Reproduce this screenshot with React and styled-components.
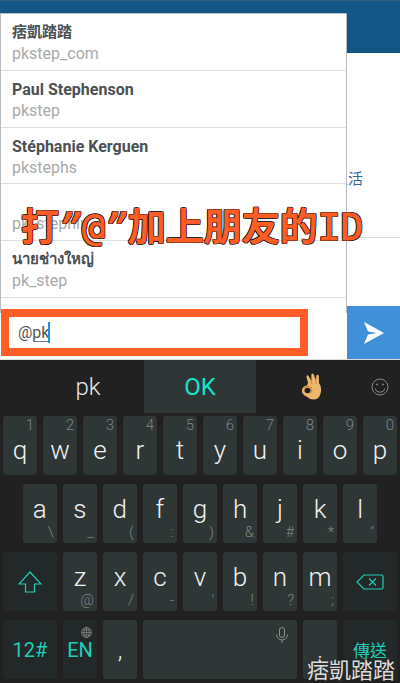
import React from "react";
import styled, { createGlobalStyle } from "styled-components";

const people = [
  { name: "痞凱踏踏", handle: "pkstep_com", compact: true },
  { name: "Paul Stephenson", handle: "pkstep" },
  { name: "Stéphanie Kerguen", handle: "pkstephs" },
  { name: "", handle: "pk_stephin" },
  { name: "นายช่างใหญ่", handle: "pk_step", compact: true },
];

const topRow = ["q1", "w2", "e3", "r4", "t5", "y6", "u7", "i8", "o9", "p0"];
const homeRow = ["a\\", "s_", "d(", "f:", "g)", "h&", "j#", "k*", 'l"'];
const bottomRow = ["z@", "x/", "c-", "v'", "b!", "n?", "m;"];

const LetterKeys = ({ keys, top }) =>
  keys.map(([letter, hint]) => (
    <Key key={letter}>
      <Letter $low={top}>{letter}</Letter>
      <Hint $top={top}>{hint}</Hint>
    </Key>
  ));

const App = () => {
  return (
    <>
      <GlobalStyle />
      <Screen>
        <Chat>
          <Header />
          <Content>
            <Message>生活</Message>
          </Content>
          <Compose>
            <InputFrame>
              <Mention type="text" aria-label="Message" defaultValue="@pk" />
              <Underline />
              <Caret />
            </InputFrame>
            <SendButton aria-label="Send">
              <svg width="20" height="22" viewBox="0 0 20 22">
                <path d="M0 0L20 11L0 22L4 12.500L13 11L4 9.500Z" fill="#fff" />
              </svg>
            </SendButton>
          </Compose>
          <Popup>
            <People>
              {people.map((person) => (
                <Person key={person.handle}>
                  <Name $compact={person.compact}>{person.name}</Name>
                  <Handle>{person.handle}</Handle>
                </Person>
              ))}
            </People>
          </Popup>
          <Caption>
            打<Latin>
              <Slant>”</Slant>@<Slant>”</Slant>
            </Latin>
            加上朋友的<Latin>ID</Latin>
          </Caption>
        </Chat>

        <Keyboard>
          <Suggestions>
            <Suggestion>pk</Suggestion>
            <Suggestion $active>OK</Suggestion>
            <Suggestion aria-label="OK hand">
              <OkHand />
            </Suggestion>
            <EmojiButton aria-label="Emoji">
              <svg width="18" height="18" viewBox="0 0 18 18" fill="none" stroke="#858787">
                <circle cx="9" cy="9" r="8" />
                <path d="M4 10.500a5.200 5.200 0 0 0 10 0" />
                <circle cx="6" cy="6.500" r="0.600" fill="#858787" />
                <circle cx="12" cy="6.500" r="0.600" fill="#858787" />
              </svg>
            </EmojiButton>
          </Suggestions>
          <Keys>
            <Row>
              <LetterKeys keys={topRow} top />
            </Row>
            <Row $inset>
              <LetterKeys keys={homeRow} />
            </Row>
            <Row>
              <Key $wide $dark aria-label="Shift">
                <svg width="24" height="22" viewBox="0 0 24 22" fill="none" stroke="#21cdb9" strokeWidth="1.200">
                  <path d="M12 1L23 13H16.500V21H7.500V13H1Z" />
                </svg>
              </Key>
              <LetterKeys keys={bottomRow} />
              <Key $wide $dark aria-label="Backspace">
                <svg width="28" height="16" viewBox="0 0 28 16" fill="none" stroke="#21cdb9" strokeWidth="1.200">
                  <path d="M1 8L8 1H25.500Q27 1 27 2.500V13.500Q27 15 25.500 15H8ZM13 4.500L20 11.500M20 4.500L13 11.500" />
                </svg>
              </Key>
            </Row>
            <Row>
              <Key $wide $dark>
                <Word>12#</Word>
              </Key>
              <Key $dark>
                <Word>EN</Word>
                <Corner>
                  <svg width="11" height="11" viewBox="0 0 11 11" fill="none" stroke="#858787" strokeWidth="0.800">
                    <circle cx="5.500" cy="5.500" r="5" />
                    <ellipse cx="5.500" cy="5.500" rx="2.500" ry="5" />
                    <path d="M5.500 0.500V10.500M0.500 5.500H10.500M1.300 3H9.700M1.300 8H9.700" />
                  </svg>
                </Corner>
              </Key>
              <Key>
                <Mark>,</Mark>
              </Key>
              <Key $space aria-label="Space">
                <Corner $inset>
                  <svg width="12" height="16" viewBox="0 0 12 16" fill="none" stroke="#8e9090">
                    <rect x="3.500" y="0.500" width="5" height="10" rx="2.500" />
                    <path d="M0.500 7.500a5.500 5.500 0 0 0 11 0M6 13V16" />
                  </svg>
                </Corner>
              </Key>
              <Key>
                <Mark>.</Mark>
              </Key>
              <Key $wide $dark>
                <Submit>傳送</Submit>
              </Key>
            </Row>
          </Keys>
          <Watermark>痞凱踏踏</Watermark>
        </Keyboard>
      </Screen>
    </>
  );
};

const OkHand = () => (
  <svg width="22" height="28" viewBox="0 0 22 28">
    <path
      d="M6 12.500L7 10L5.500 4Q5.500 1.800 7.200 2.500L10.500 8L10.300 1.500Q11 -0.300 12.700 1.200L15 7.500L15.300 2.500Q16.500 0.800 17.800 2.700L18 10Q20.500 13 20 18Q19.500 25 14 26.500Q9 27 5.500 23.500Q0.500 21.500 1 17Q2 12.700 6 12.500Z"
      fill="#edb66d"
    />
    <ellipse cx="6.500" cy="17.500" rx="3" ry="2.800" fill="#212121" />
    <path d="M3 14.500Q7 12 10.500 14.500Q11.500 18 9.500 20.500M10.500 8L11 11.500M15 7.500V11" fill="none" stroke="#b97937" strokeWidth="0.800" />
  </svg>
);

export default App;

const GlobalStyle = createGlobalStyle`
  * {
    box-sizing: border-box;
  }
  body {
    margin: 0;
    background: #212121;
    font-family: Roboto, "Noto Sans CJK TC", sans-serif;
  }
  button {
    margin: 0;
    padding: 0;
    border: none;
    font-family: inherit;
  }
  svg {
    display: block;
  }
`;
const Screen = styled.div`
  min-height: 100vh;
  display: flex;
  flex-direction: column;
`;
const Chat = styled.section`
  position: relative;
  display: flex;
  flex-direction: column;
  background: #fff;
`;
const Header = styled.header`
  height: 53px;
  background: #115686;
  border-top: 1px solid #315f80;
`;
const Content = styled.div`
  height: 185px;
  padding: 115px 37px 0 0;
  border-bottom: 1px solid #dcdcdc;
  text-align: right;
`;
const Message = styled.div`
  color: #2f6692;
  font-size: 15px;
  line-height: 22px;
`;
const Compose = styled.div`
  display: flex;
  align-items: flex-end;
  justify-content: space-between;
  margin-top: 68px;
  border-bottom: 1px solid #ddd;
`;
const InputFrame = styled.div`
  position: relative;
  flex: 1;
  height: 47px;
  margin: 0 39px 3px 1px;
  border: 8px solid #ff5d27;
  background: #fff;
`;
const Mention = styled.input`
  width: 100%;
  height: 31px;
  padding: 0 9px;
  border: none;
  outline: none;
  background: transparent;
  color: #555;
  font-family: Roboto, sans-serif;
  font-size: 16px;
`;
const Underline = styled.span`
  position: absolute;
  left: 24px;
  top: 24px;
  width: 15px;
  height: 1px;
  background: #777;
`;
const Caret = styled.span`
  position: absolute;
  left: 39px;
  top: 5px;
  width: 2px;
  height: 21px;
  background: #1695f5;
`;
const SendButton = styled.button`
  width: 53px;
  height: 53px;
  display: flex;
  align-items: center;
  justify-content: center;
  background: #3f90d9;
`;
const Popup = styled.div`
  position: absolute;
  left: 0;
  right: 53px;
  top: 13px;
  height: 300px;
  border: solid #b9bcbe;
  border-width: 1px 1px 0;
  /* the bottom of the list runs behind the compose field */
  clip-path: polygon(0 0, 100% 0, 100% 100%, calc(100% - 1px) 100%, calc(100% - 1px) 293px, 1px 293px, 1px 100%, 0 100%);
  background: #fff;
`;
const People = styled.ul`
  height: 284px;
  margin: 0;
  padding: 0;
  display: grid;
  grid-template-rows: repeat(5, 1fr);
  list-style: none;
`;
const Person = styled.li`
  padding: 8px 11px 0;
  border-bottom: 1px solid #dfdfdf;
`;
const Name = styled.div`
  height: 21px;
  color: #4b5053;
  font-family: Roboto, "Noto Sans CJK TC", "Noto Sans", sans-serif;
  font-size: ${({ $compact }) => ($compact ? "15px" : "16px")};
  font-weight: 700;
  line-height: 21px;
`;
const Handle = styled.div`
  color: #aaa;
  font-size: 16px;
  line-height: 22px;
`;
const Caption = styled.div`
  position: absolute;
  left: 21px;
  top: 200px;
  color: #ff5d27;
  font-family: "Noto Sans CJK TC", sans-serif;
  font-size: 38px;
  font-weight: 500;
  line-height: 48px;
  white-space: nowrap;
  -webkit-text-stroke: 1px #ff5d27;
  text-shadow: 1px 0 #111, -1px 0 #111, 0 1px #111, 0 -1px #111, 1px 1px #111,
    -1px 1px #111, 1px -1px #111, -1px -1px #111;
`;
const Latin = styled.span`
  font-family: "DejaVu Sans Mono", monospace;
`;
const Slant = styled.span`
  font-style: italic;
`;
const Keyboard = styled.section`
  position: relative;
  flex: 1;
  background: #212121;
`;
const Suggestions = styled.div`
  display: grid;
  grid-template-columns: 1fr 1fr 1fr 32px;
  height: 53px;
  padding-left: 32px;
`;
const Suggestion = styled.button`
  display: flex;
  align-items: center;
  justify-content: center;
  background: ${({ $active }) => ($active ? "#2f3636" : "transparent")};
  color: ${({ $active }) => ($active ? "#10e5cc" : "#e8e8e8")};
  font-size: 24px;
  font-weight: ${({ $active }) => ($active ? 400 : 300)};
`;
const EmojiButton = styled.button`
  display: flex;
  align-items: center;
  padding-left: 3px;
  background: transparent;
`;
const Keys = styled.div`
  display: flex;
  flex-direction: column;
  gap: 9px;
  padding: 3px 3px 4px;
`;
const Row = styled.div`
  display: flex;
  gap: 6px;
  padding: 0 ${({ $inset }) => ($inset ? "5%" : "0")};
`;
const Key = styled.button`
  position: relative;
  flex: ${({ $wide, $space }) => ($space ? "154 1 0" : $wide ? "54 1 0" : "34 1 0")};
  min-width: 0;
  height: 59px;
  display: flex;
  align-items: center;
  justify-content: center;
  border-radius: 3px;
  background: ${({ $dark }) => ($dark ? "#232828" : "#2f3636")};
  color: #f1f1f1;
`;
const Letter = styled.span`
  padding-top: ${({ $low }) => ($low ? "8px" : "0")};
  padding-bottom: ${({ $low }) => ($low ? "0" : "10px")};
  font-size: 26px;
  font-weight: 300;
  line-height: 32px;
`;
const Hint = styled.span`
  position: absolute;
  right: 3px;
  ${({ $top }) => ($top ? "top: 0;" : "bottom: 2px;")}
  color: #808484;
  font-size: 15px;
  font-weight: 300;
  line-height: 18px;
`;
const Word = styled.span`
  color: #21cdb9;
  font-size: 20px;
`;
const Mark = styled.span`
  font-size: 24px;
  font-weight: 300;
`;
const Corner = styled.span`
  position: absolute;
  top: 7px;
  right: ${({ $inset }) => ($inset ? "9px" : "5px")};
`;
const Submit = styled.span`
  color: #21cdb9;
  font-size: 17px;
`;
const Watermark = styled.div`
  position: absolute;
  right: 5px;
  bottom: 3px;
  color: #dcdcdc;
  font-family: "Noto Sans CJK TC", sans-serif;
  font-size: 22px;
  line-height: 24px;
  text-shadow: 0 0 2px #222;
  pointer-events: none;
`;
